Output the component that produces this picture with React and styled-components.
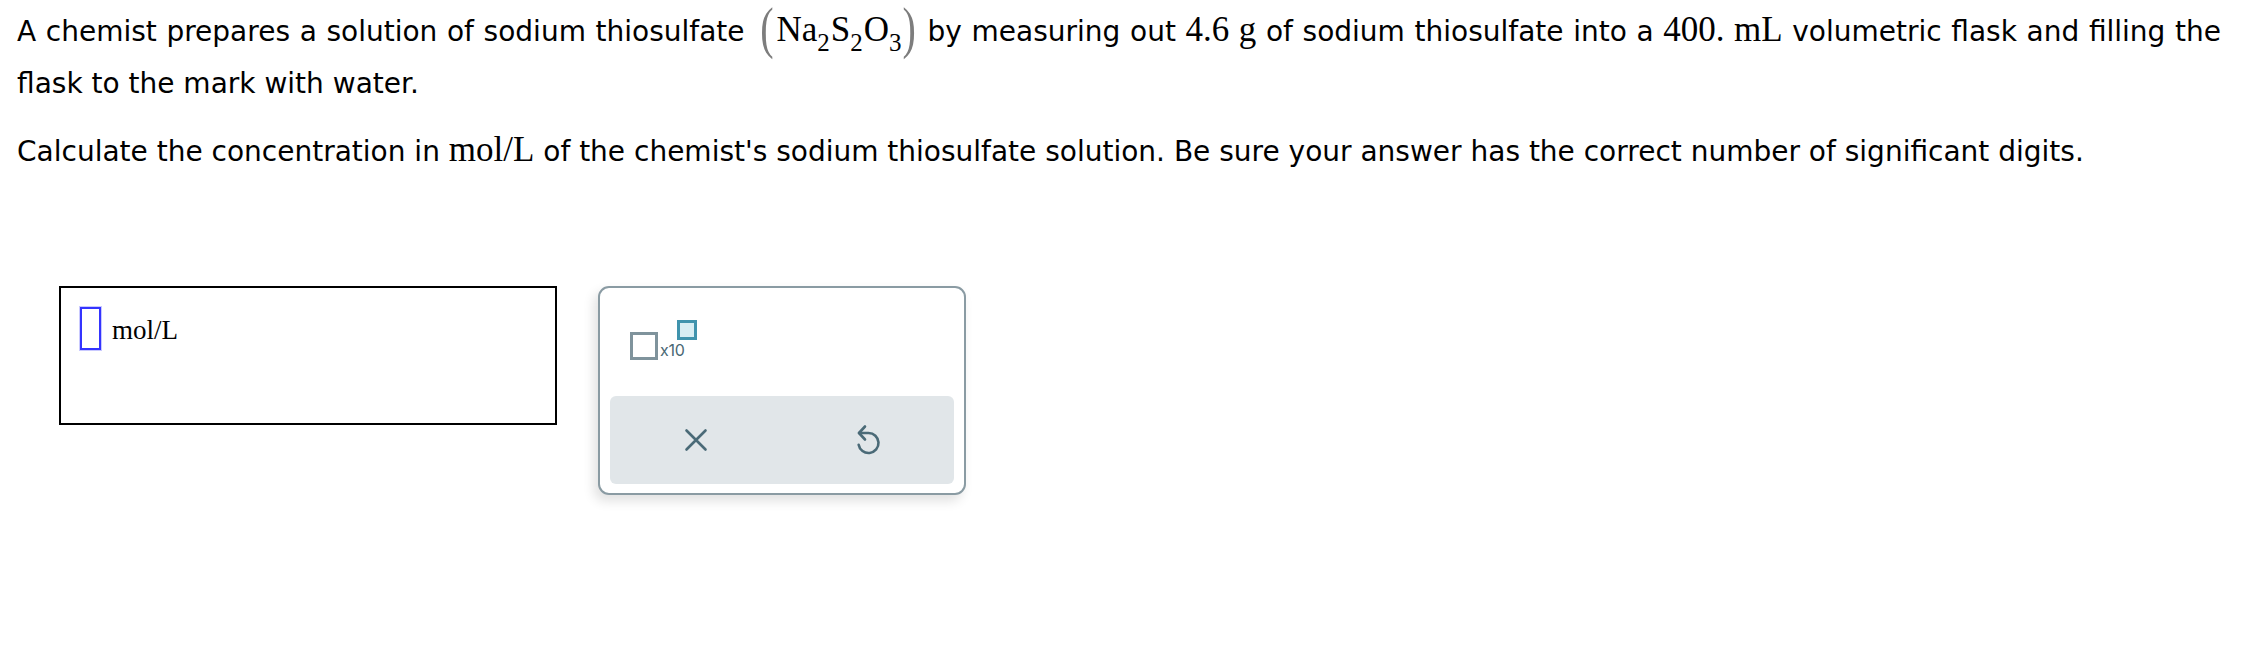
import React from 'react';
import styled, { createGlobalStyle } from 'styled-components';

const GlobalStyle = createGlobalStyle`
    body {
        margin: 0;
        background: #fff;
    }
`;

const Page = styled.main`
    padding: 6px 35px 40px 17px;
    font-family: "DejaVu Sans", Verdana, sans-serif;
    font-size: 28px;
    color: #000;
`;

const Para = styled.p`
    margin: 0;
    line-height: 52px;
    text-align: justify;

    & + & {
        margin-top: 16px;
    }
`;

const Math = styled.span`
    font-family: "Liberation Serif", "Times New Roman", serif;
    font-size: 35px;
    line-height: 0;
`;

const Sub = styled.span`
    font-size: 25px;
    vertical-align: -10px;
    line-height: 0;
    margin-right: 1px;
`;

const Paren = styled.span`
    display: inline-block;
    font-family: "Liberation Serif", "Times New Roman", serif;
    font-size: 40px;
    line-height: 0;
    color: #7d7d7d;
    transform: scaleY(1.45);
    margin: ${props => (props.open ? '0 3px 0 6px' : '0 2px 0 0')};
`;

const AnswerRow = styled.div`
    display: flex;
    align-items: flex-start;
    gap: 41px;
    margin: 108px 0 0 42px;
`;

const AnswerBox = styled.div`
    box-sizing: border-box;
    width: 498px;
    height: 139px;
    border: 2px solid #000;
    padding: 19px;
    display: flex;
    align-items: flex-start;
`;

const Cursor = styled.span`
    box-sizing: border-box;
    width: 21px;
    height: 43px;
    border: 2px solid #3434ff;
    box-shadow: 0 0 0 1px #c9c9ff;
`;

const Unit = styled.span`
    margin-left: 11px;
    padding-top: 2px;
    font-family: "Liberation Serif", "Times New Roman", serif;
    font-size: 27px;
    line-height: 43px;
`;

const Keypad = styled.div`
    box-sizing: border-box;
    width: 368px;
    height: 209px;
    border: 2px solid #8a9ba3;
    border-radius: 11px;
    background: #fff;
    box-shadow: -4px 6px 12px rgba(0, 0, 0, 0.12);
    padding: 0 10px 9px;
    display: flex;
    flex-direction: column;
`;

const KeyTop = styled.div`
    flex: 1;
    padding: 32px 20px 0;
`;

const SciKey = styled.div`
    display: inline-flex;
    align-items: flex-end;
    height: 40px;
`;

const BaseSq = styled.span`
    box-sizing: border-box;
    width: 28px;
    height: 28px;
    border: 3px solid #7f939c;
`;

const Exp = styled.span`
    font-family: Inter, "Open Sans", sans-serif;
    font-size: 16px;
    line-height: 16px;
    color: #4a6874;
    margin: 0 0 2px 2px;
    letter-spacing: -0.3px;
`;

const SupSq = styled.span`
    box-sizing: border-box;
    align-self: flex-start;
    width: 20px;
    height: 20px;
    margin-left: -7px;
    border: 3px solid #3f93ad;
    background: #d6edf3;
`;

const ActionBar = styled.div`
    height: 88px;
    border-radius: 6px;
    background: #e1e6e9;
    display: grid;
    grid-template-columns: 1fr 1fr;
    align-items: center;
    justify-items: center;
`;

const IconButton = styled.button`
    border: 0;
    padding: 0;
    background: transparent;
    color: #4a6a77;
    display: flex;
    align-items: center;
    justify-content: center;
`;

const ClearIcon = () => (
    <svg width="24" height="24" viewBox="0 0 24 24" fill="none" stroke="currentColor" strokeWidth="2.6" strokeLinecap="round">
        <path d="M2.5 2.5 21.5 21.5M21.5 2.5 2.5 21.5" />
    </svg>
);

const UndoIcon = () => (
    <svg width="32" height="36" viewBox="0 0 32 36" fill="none" stroke="currentColor" strokeWidth="2.6" strokeLinecap="round" strokeLinejoin="round">
        <path d="M13 4.5 7 11l6 6.5" />
        <path d="M7 11h9.5a10 10 0 1 1-9.85 11.7" />
    </svg>
);

export default function App() {
    return (
        <Page>
            <GlobalStyle />
            <Para>
                A chemist prepares a solution of sodium thiosulfate{' '}
                <Math>
                    <Paren open>(</Paren>
                    Na<Sub>2</Sub>S<Sub>2</Sub>O<Sub>3</Sub>
                    <Paren>)</Paren>
                </Math>{' '}
                by measuring out <Math>4.6 g</Math> of sodium thiosulfate into a <Math>400. mL</Math> volumetric
                flask and filling the flask to the mark with water.
            </Para>
            <Para>
                Calculate the concentration in <Math>mol/L</Math> of the chemist's sodium thiosulfate solution. Be
                sure your answer has the correct number of significant digits.
            </Para>
            <AnswerRow>
                <AnswerBox>
                    <Cursor />
                    <Unit>mol/L</Unit>
                </AnswerBox>
                <Keypad>
                    <KeyTop>
                        <SciKey>
                            <BaseSq />
                            <Exp>x10</Exp>
                            <SupSq />
                        </SciKey>
                    </KeyTop>
                    <ActionBar>
                        <IconButton>
                            <ClearIcon />
                        </IconButton>
                        <IconButton>
                            <UndoIcon />
                        </IconButton>
                    </ActionBar>
                </Keypad>
            </AnswerRow>
        </Page>
    );
}
